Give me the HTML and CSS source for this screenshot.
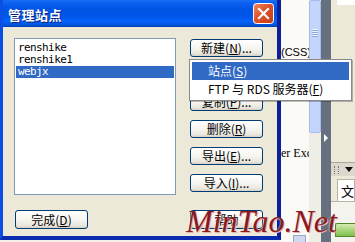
FILE: index.html
```html
<!DOCTYPE html>
<html lang="zh-CN">
<head>
  <meta charset="UTF-8" />
  <title>管理站点</title>
  <link rel="stylesheet" href="styles.css">
</head>
<body>
  <div class="screen">
    <!-- 对话框 -->
    <div class="dialog">
      <div class="titlebar">
        <span class="title">管理站点</span>
        <span class="close">
          <svg width="21" height="21" viewBox="0 0 21 21">
            <defs>
              <linearGradient id="cl" x1="0" y1="0" x2="1" y2="1">
                <stop offset="0" stop-color="#f08a64" />
                <stop offset="0.45" stop-color="#e0522a" />
                <stop offset="1" stop-color="#c23a14" />
              </linearGradient>
            </defs>
            <rect x="0.5" y="0.5" width="20" height="20" rx="3" fill="url(#cl)" stroke="#fff" />
            <path d="M6 6 L15 15 M15 6 L6 15" stroke="#fff" stroke-width="2.2" stroke-linecap="square" />
          </svg>
        </span>
      </div>
      <div class="content">
        <ul class="sites">
          <li>renshike</li>
          <li>renshike1</li>
          <li class="selected">webjx</li>
        </ul>
        <div class="actions">
          <button class="btn">新建(<u>N</u>)...</button>
          <button class="btn">编辑(<u>E</u>)...</button>
          <button class="btn">复制(<u>P</u>)...</button>
          <button class="btn">删除(<u>R</u>)</button>
          <button class="btn">导出(<u>E</u>)...</button>
          <button class="btn">导入(<u>I</u>)...</button>
        </div>
        <button class="btn done">完成(<u>D</u>)</button>
        <button class="btn">帮助</button>
      </div>
    </div>

    <!-- 背后的编辑器 -->
    <div class="backdrop">
      <div class="doc">
        <span class="css">(CSS)</span>
        <span class="exc">er Exc</span>
        <span class="mini"></span>
      </div>
      <div class="scroll">
        <div class="thumb"><i></i><i></i><i></i><i></i></div>
      </div>
      <div class="splitter"><span class="arrow"></span></div>
      <div class="panel">
        <div class="panel-top"></div>
        <div class="panel-head"><span class="grip"></span><span class="caret"></span></div>
        <div class="panel-tab">文</div>
        <div class="panel-body"><span class="folder"></span></div>
      </div>
    </div>

    <!-- 新建 菜单 -->
    <div class="menu">
      <div class="item active">站点(<u>S</u>)</div>
      <div class="item">FTP 与 RDS 服务器(<u>F</u>)</div>
    </div>

    <div class="watermark">MinTao.Net</div>
  </div>
</body>
</html>
```

FILE: styles.css
```css
body {
  margin: 0;
  padding: 0;
  font-family: "Noto Sans CJK SC", sans-serif;
  font-size: 12px;
  color: #000;
}

.screen {
  position: relative;
  display: flex;
  width: 355px;
  height: 242px;
  overflow: hidden;
  background: #f2f1ec;
}

.dialog {
  box-sizing: border-box;
  width: 283px;
  height: 240px;
  display: flex;
  flex-direction: column;
  border-left: 3px solid #0b4fe6;
  border-right: 4px solid #0a1f9a;
  border-bottom: 4px solid #0a2bb0;
  background: #ece9d8;
}

.titlebar {
  height: 27px;
  flex-shrink: 0;
  display: flex;
  align-items: center;
  justify-content: space-between;
  padding: 0 3px 0 5px;
  background: linear-gradient(to bottom, #1a6cf4 0%, #0a5ef0 15%, #0054e3 35%, #0056eb 60%, #0462f8 80%, #0052d6 94%, #0040ab 100%);
}

.title {
  color: #fff;
  font-size: 13px;
  font-weight: bold;
  letter-spacing: 0.5px;
  text-shadow: 1px 1px 0 #0a1f7a;
  margin-top: 1px;
}

.close {
  display: flex;
  margin-top: -1px;
}

.content {
  flex: 1;
  display: grid;
  grid-template-columns: 162px 73px;
  grid-template-rows: 157px 19px;
  column-gap: 14px;
  row-gap: 15px;
  padding: 11px 0 0 11px;
}

.sites {
  margin: 0;
  padding: 1px;
  list-style: none;
  background: #fff;
  border: 1px solid #7f9db9;
  font-family: "DejaVu Sans Mono", monospace;
  font-size: 11px;
  letter-spacing: -0.6px;
}

.sites li {
  height: 12px;
  line-height: 12px;
  padding-left: 2px;
}

.sites li:first-child {
  margin-top: 2px;
}

.sites .selected {
  background: #316ac5;
  color: #fff;
}

.actions {
  display: flex;
  flex-direction: column;
  gap: 9px;
  padding-top: 1px;
}

.btn {
  box-sizing: border-box;
  width: 73px;
  height: 18px;
  padding: 0;
  border: 1px solid #003c74;
  border-radius: 3px;
  background: linear-gradient(to bottom, #ffffff 0%, #f6f5f0 50%, #e8e6dd 85%, #d6d0c5 100%);
  font-family: "Noto Sans CJK SC", sans-serif;
  font-size: 12px;
  line-height: 14px;
  color: #000;
}

.content > .btn {
  height: 19px;
}

.done {
  margin-left: 1px;
}

.btn u {
  text-decoration: underline;
}

/* 背景编辑器 */
.backdrop {
  flex: 1;
  display: flex;
}

.doc {
  width: 28px;
  display: flex;
  flex-direction: column;
  background: #fbfaf6;
  white-space: nowrap;
  overflow: hidden;
}

.css {
  margin-top: 46px;
  font-family: "Liberation Sans", sans-serif;
  font-size: 11px;
  line-height: 12px;
}

.exc {
  margin-top: 89px;
  font-family: "Liberation Serif", serif;
  font-size: 12px;
  line-height: 12px;
}

.mini {
  margin: auto 3px 0 12px;
  height: 6px;
  background: #cfd9ef;
  border: 1px solid #98a8c8;
  border-bottom: none;
}

.scroll {
  width: 12px;
  background: #eeede6;
}

.thumb {
  box-sizing: border-box;
  height: 133px;
  border: 1px solid #a4baf0;
  border-radius: 2px;
  background: #c4d5fb;
  display: flex;
  flex-direction: column;
  align-items: center;
  gap: 1px;
  padding-top: 28px;
}

.thumb i {
  width: 6px;
  height: 1px;
  background: #eef3ff;
  box-shadow: 0 1px 0 #8ea8e6;
}

.splitter {
  width: 10px;
  background: #66707f;
  display: flex;
  justify-content: center;
}

.arrow {
  margin-top: 134px;
  width: 0;
  height: 0;
  border-top: 4px solid transparent;
  border-bottom: 4px solid transparent;
  border-left: 4px solid #fff;
}

.panel {
  flex: 1;
  display: flex;
  flex-direction: column;
  background: #ece9d8;
}

.panel-top {
  height: 162px;
  background: linear-gradient(to bottom, #fff 0, #fff 5px, #ece9d8 5px);
  margin-left: 6px;
}

.panel-head {
  height: 13px;
  display: flex;
  align-items: center;
  gap: 6px;
  padding-left: 3px;
  background: #dcd9cc;
  border-top: 1px solid #a9a799;
}

.grip {
  width: 3px;
  height: 8px;
  border-left: 1px dotted #777;
  border-right: 1px dotted #777;
}

.caret {
  width: 0;
  height: 0;
  border-left: 4px solid transparent;
  border-right: 4px solid transparent;
  border-top: 5px solid #111;
}

.panel-tab {
  margin: 3px 0 0 6px;
  height: 21px;
  line-height: 21px;
  padding-left: 3px;
  background: #fff;
  border: 1px solid #b8b4a4;
  border-bottom: none;
  font-size: 13px;
}

.panel-body {
  flex: 1;
  border-top: 1px solid #b8b4a4;
  background: #f4f3ee;
  padding: 21px 0 0 4px;
}

.folder {
  display: block;
  height: 12px;
  border-radius: 2px 0 0 0;
  background: linear-gradient(to bottom, #d4ecb0, #7fbf4a);
  border: 1px solid #4f8a2a;
  border-right: none;
}

/* 弹出菜单 */
.menu {
  position: absolute;
  left: 189px;
  top: 59px;
  width: 163px;
  box-sizing: border-box;
  padding: 2px;
  background: #fff;
  border: 1px solid #8a8a8a;
  box-shadow: 1px 1px 0 rgba(0, 0, 0, 0.25);
}

.menu .item {
  height: 18px;
  line-height: 18px;
  padding-left: 16px;
  white-space: nowrap;
}

.menu .active {
  background: #316ac5;
  color: #fff;
}

.watermark {
  position: absolute;
  left: 186px;
  top: 203px;
  font-family: "Liberation Serif", serif;
  font-style: italic;
  font-size: 32px;
  line-height: 36px;
  color: #8a1a1e;
  text-shadow: 1px 1px 0 #e9b0b0, -1px 0 0 rgba(255, 255, 255, 0.5);
  white-space: nowrap;
}
```
